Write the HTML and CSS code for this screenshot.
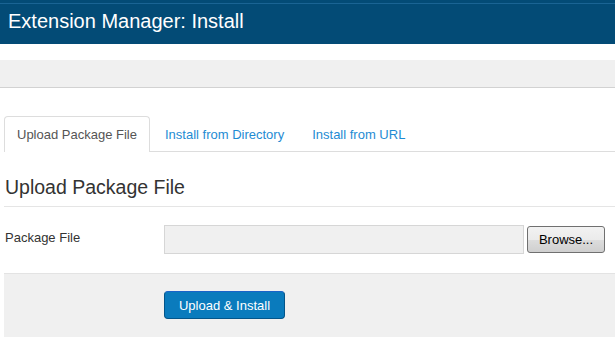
FILE: index.html
```html
<!DOCTYPE html>
<html>
	<head>
		<meta charset="UTF-8">
		<title>Extension Manager: Install</title>
		<link rel="stylesheet" href="styles.css">
	</head>
	<body>
		<div class="header">
			<h1 class="page-title">Extension Manager: Install</h1>
		</div>
		<div class="subhead"></div>
		<div class="content">
			<ul class="tabs">
				<li class="active"><a href="#">Upload Package File</a></li>
				<li><a href="#">Install from Directory</a></li>
				<li><a href="#">Install from URL</a></li>
			</ul>
			<h2 class="legend">Upload Package File</h2>
			<div class="row">
				<label class="label">Package File</label>
				<div class="file">
					<div class="file_input"></div>
					<button class="browse">Browse...</button>
				</div>
			</div>
			<div class="actions">
				<button class="btn_primary">Upload &amp; Install</button>
			</div>
		</div>
	</body>
</html>
```

FILE: styles.css
```css
body{margin: 0; background: #fff; font: 13px "Liberation Sans", Arial, sans-serif; color: #333;}
ul{padding: 0; margin: 0;} li{list-style: none;}
.header{height: 41px; background: #034b76; border-top: 3px solid #034b76; box-shadow: inset 0 1px 0 #1a6494;}
.page-title{margin: 0; padding: 0 8px; font-size: 20px; font-weight: normal; line-height: 37px; color: #fff;}
.subhead{height: 27px; margin-top: 16px; background: #f0f0f0; border-bottom: 1px solid #d2d2d2;}
.content{padding: 28px 0 0 4px;}
.tabs{display: flex; border-bottom: 1px solid #ddd; height: 35px;}
.tabs li{margin-right: 2px;}
.tabs a{display: block; height: 35px; line-height: 35px; padding: 0 12px; border: 1px solid transparent; border-bottom: none; border-radius: 4px 4px 0 0; color: #1e8bd3; text-decoration: none; box-sizing: border-box;}
.tabs li.active a{height: 36px; margin-bottom: -1px; color: #555; background: #fff; border-color: #ddd;}
.legend{margin: 24px 0 0; padding-left: 1px; padding-bottom: 8px; font-size: 19.5px; font-weight: normal; line-height: 22px; color: #333; border-bottom: 1px solid #e5e5e5;}
.row{display: flex; align-items: flex-start; margin-top: 18px; height: 29px;}
.label{width: 159px; padding: 4px 0 0 1px; line-height: 18px; color: #333;}
.file{display: flex; align-items: center;}
.file_input{width: 358px; height: 27px; background: #f0f0f0; border: 1px solid #d6d6d6;}
.browse{margin-left: 3px; width: 78px; height: 27px; padding: 0; font: 13px "Liberation Sans", Arial, sans-serif; color: #000; border: 1px solid #707070; border-radius: 3px; background: linear-gradient(#f2f2f2 0%, #ebebeb 50%, #dddddd 51%, #cfcfcf 100%);}
.actions{margin-top: 19px; height: 64px; padding-top: 17px; padding-left: 160px; box-sizing: border-box; background: #f0f0f0; border-top: 1px solid #e3e3e3;}
.btn_primary{width: 121px; height: 28px; padding: 0; font: 13px "Liberation Sans", Arial, sans-serif; color: #fff; background: #0a7bbd; border: 1px solid #03558a; border-top-color: #1a63c8; border-radius: 4px;}
```
